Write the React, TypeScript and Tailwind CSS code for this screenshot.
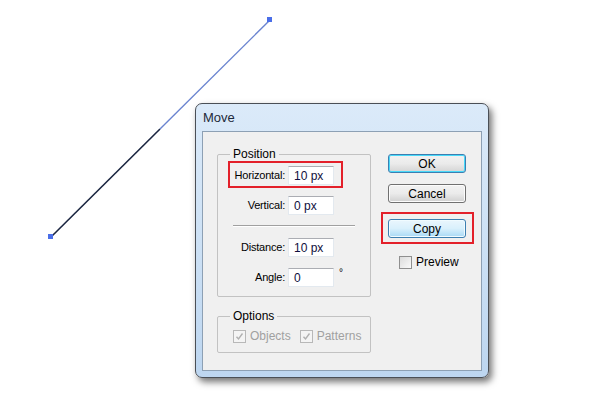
import React from 'react'

const font = { fontFamily: '"Liberation Sans", Arial, sans-serif' }

function Field({ label, value, className = '' }: { label: string; value: string; className?: string }) {
  return (
    <div className={`flex items-center ${className}`}>
      <span className="w-[70px] pr-[3px] text-right text-[11px] tracking-[-0.2px] text-black">{label}</span>
      <div className="w-[46px] h-[19px] bg-white border border-[#e3e9ef] border-t-[#abadb3] flex items-center pl-[5px] text-[12px] text-[#101040]">
        {value}
      </div>
    </div>
  )
}

function Checkbox({ label, checked = false, disabled = false }: { label: string; checked?: boolean; disabled?: boolean }) {
  return (
    <div className="flex items-center gap-[4px]">
      <div
        className={`w-[13px] h-[13px] border flex items-center justify-center ${
          disabled ? 'border-[#b8b8b8] bg-[#f4f4f4]' : 'border-[#8f8f8f] bg-gradient-to-br from-[#dcdcdc] to-[#fafafa]'
        }`}
      >
        {checked && (
          <svg width="9" height="9" viewBox="0 0 9 9">
            <path d="M1.5 4.8 L3.5 7 L7.5 1.5" fill="none" stroke={disabled ? '#b0b0b0' : '#333'} strokeWidth="1.4" />
          </svg>
        )}
      </div>
      <span className={`text-[12px] ${disabled ? 'text-[#a0a0a0]' : 'text-black'}`}>{label}</span>
    </div>
  )
}

function Button({ label, kind }: { label: string; kind: 'default' | 'normal' | 'hot' }) {
  const styles = {
    default: 'border-[#3c7fb1] bg-gradient-to-b from-[#f2f2f2] via-[#ebebeb] to-[#d4d4d4] shadow-[inset_0_0_0_1px_#48d9f9]',
    normal: 'border-[#707070] bg-gradient-to-b from-[#f2f2f2] via-[#ebebeb] to-[#d0d0d0] shadow-[inset_0_0_0_1px_#fcfcfc]',
    hot: 'border-[#3c7fb1] bg-gradient-to-b from-[#eaf6fd] via-[#d9f0fc] to-[#a7d9f5] shadow-[inset_0_0_0_1px_#f0fbff]',
  }
  return (
    <div className={`w-[78px] h-[19px] rounded-[3px] border flex items-center justify-center text-[12px] text-black ${styles[kind]}`}>
      {label}
    </div>
  )
}

export default function App() {
  return (
    <div className="relative w-[600px] h-[414px] bg-white overflow-hidden" style={font}>
      {/* selected path on the artboard */}
      <svg className="absolute left-0 top-0" width="600" height="414">
        <line x1="51" y1="237" x2="160" y2="129" stroke="#1a2540" strokeWidth="1.6" />
        <line x1="160" y1="129" x2="270" y2="20" stroke="#6a84d0" strokeWidth="1.4" />
        <rect x="48" y="234" width="5" height="5" fill="#4a6ee8" />
        <rect x="267" y="17" width="5" height="5" fill="#4a6ee8" />
      </svg>

      {/* Move dialog */}
      <div className="absolute left-[195px] top-[103px] w-[294px] h-[275px] rounded-[7px] border border-[#4a4f56] bg-gradient-to-b from-[#dbeaf9] via-[#cde1f5] to-[#bdd6f0] shadow-[3px_4px_7px_rgba(0,0,0,0.55)] flex flex-col">
        <div className="h-[27px] flex items-center pl-[7px] text-[13px] text-[#1e2a3a]">Move</div>
        <div className="mx-[6px] mb-[6px] flex-1 border border-[#8da0b4] bg-[#f0f0f0] flex pl-[14px] pt-[22px] gap-[17px]">
          {/* left column */}
          <div className="flex flex-col w-[154px]">
            <div className="relative h-[143px] border border-[#c2c2c2] rounded-[2px] pt-[11px]">
              <span className="absolute -top-[8px] left-[12px] px-[3px] bg-[#f0f0f0] text-[12px] text-black leading-[14px]">Position</span>
              <div className="relative">
                <Field label="Horizontal:" value="10 px" />
                <div className="absolute left-[10px] -top-[5px] w-[115px] h-[27px] border-2 border-[#e3202a]" />
              </div>
              <Field label="Vertical:" value="0 px" className="mt-[11px]" />
              <div className="ml-[15px] mt-[10px] w-[122px] h-[2px] border-t border-[#a0a0a0] border-b border-b-white" />
              <Field label="Distance:" value="10 px" className="mt-[11px]" />
              <div className="flex items-start mt-[11px]">
                <Field label="Angle:" value="0" />
                <span className="ml-[5px] text-[10px] leading-[10px] text-black">°</span>
              </div>
            </div>
            <div className="relative mt-[19px] h-[37px] border border-[#c2c2c2] rounded-[2px] flex items-center pl-[15px] gap-[9px] pt-[3px]">
              <span className="absolute -top-[8px] left-[12px] px-[3px] bg-[#f0f0f0] text-[12px] text-black leading-[14px]">Options</span>
              <Checkbox label="Objects" checked disabled />
              <Checkbox label="Patterns" checked disabled />
            </div>
          </div>

          {/* right column */}
          <div className="flex flex-col w-[78px]">
            <Button label="OK" kind="default" />
            <div className="mt-[11px]">
              <Button label="Cancel" kind="normal" />
            </div>
            <div className="relative mt-[16px]">
              <Button label="Copy" kind="hot" />
              <div className="absolute -left-[7px] -top-[7px] w-[93px] h-[32px] border-2 border-[#e3202a]" />
            </div>
            <div className="mt-[15px] pl-[11px]">
              <Checkbox label="Preview" />
            </div>
          </div>
        </div>
      </div>
    </div>
  )
}
